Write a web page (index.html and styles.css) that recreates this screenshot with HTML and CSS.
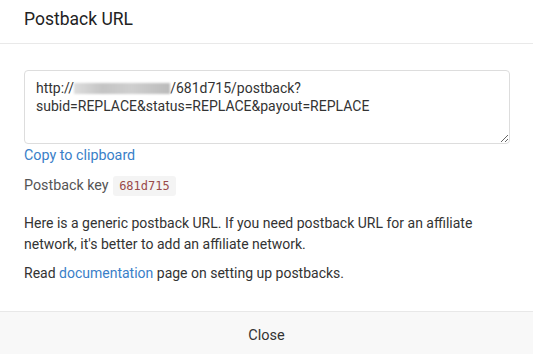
FILE: index.html
```html
<!DOCTYPE html>
<html lang="en">
<head>
    <meta charset="UTF-8">
    <meta name="viewport" content="width=device-width, initial-scale=1.0">
    <title>Postback URL</title>
    <link rel="stylesheet" href="styles.css">
</head>
<body>
    <div class="modal">
        <div class="modal-header">
            <h4>Postback URL</h4>
        </div>
        <div class="modal-body">
            <div class="url-box">http://<span class="blurred"></span>/681d715/postback?<br>subid=REPLACE&amp;status=REPLACE&amp;payout=REPLACE</div>
            <a href="#" class="copy">Copy to clipboard</a>
            <p class="key">Postback key <code>681d715</code></p>
            <p>Here is a generic postback URL. If you need postback URL for an affiliate network, it's better to add an affiliate network.</p>
            <p>Read <a href="#">documentation</a> page on setting up postbacks.</p>
        </div>
        <div class="modal-footer">
            <button class="close-btn">Close</button>
        </div>
    </div>
</body>
</html>
```

FILE: styles.css
```css
body {
    margin: 0;
    font-family: Roboto, "Liberation Sans", sans-serif;
    font-size: 14px;
    color: #333;
    background: #fff;
}
.modal {
    background: #fff;
    border-top-left-radius: 4px;
}
.modal-header {
    padding: 0 24px;
    height: 43px;
    border-bottom: 1px solid #e9e9e9;
    display: flex;
    align-items: center;
}
.modal-header h4 {
    margin: 0;
    font-size: 17.5px;
    font-weight: 400;
    color: #222;
    padding-bottom: 6px;
}
.modal-body {
    padding: 26px 23px 27px 24px;
}
.url-box {
    border: 1px solid #ddd;
    border-radius: 4px;
    height: 74px;
    box-sizing: border-box;
    padding: 8px 11px;
    line-height: 18px;
    font-size: 14px;
    color: #333;
    resize: vertical;
    overflow: auto;
}
.blurred {
    display: inline-block;
    width: 96px;
    height: 11px;
    vertical-align: -1px;
    background: linear-gradient(90deg, #ddd, #c4c4c4 30%, #cfcfcf 60%, #bbb);
    filter: blur(1.2px);
}
a {
    color: #3a80c8;
    text-decoration: none;
}
.copy {
    display: block;
    margin-top: 2px;
    line-height: 18px;
    font-size: 14.3px;
}
.modal-body p {
    margin: 8px 0 0;
    line-height: 21px;
    font-size: 14px;
}
.modal-body p.key {
    margin-top: 11px;
    color: #555;
    line-height: 20px;
    font-size: 14.3px;
}
.modal-body p.key + p {
    margin-top: 17px;
}
code {
    font-family: "DejaVu Sans Mono", "Liberation Mono", monospace;
    font-size: 12px;
    color: #9a4a4a;
    background: #f4f4f4;
    border-radius: 3px;
    padding: 3px 6px;
    margin-left: 1px;
}
.modal-footer {
    border-top: 1px solid #e8e8e8;
    background: #f8f8f8;
    height: 44px;
    display: flex;
    align-items: center;
    justify-content: center;
}
.close-btn {
    border: none;
    background: none;
    font-family: inherit;
    font-size: 14.5px;
    color: #333;
    padding: 3px 0 0;
}
```
